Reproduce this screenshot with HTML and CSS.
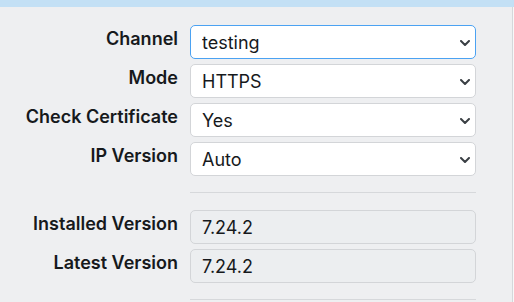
FILE: index.html
```html
<!DOCTYPE html>
<html lang="en">
<head>
<meta charset="utf-8">
<title>Update settings</title>
<link rel="stylesheet" href="styles.css">
</head>
<body>
<div class="topbar"></div>
<div class="panel">
  <form class="form">
    <label class="label" for="channel">Channel</label>
    <div class="select focused">
      <select id="channel"><option>testing</option></select>
      <svg class="chev" width="10" height="6" viewBox="0 0 10 6"><path d="M1 1 L5 5 L9 1" fill="none" stroke="#3a3f44" stroke-width="2" stroke-linecap="round" stroke-linejoin="round"/></svg>
    </div>

    <label class="label" for="mode">Mode</label>
    <div class="select">
      <select id="mode"><option>HTTPS</option></select>
      <svg class="chev" width="10" height="6" viewBox="0 0 10 6"><path d="M1 1 L5 5 L9 1" fill="none" stroke="#3a3f44" stroke-width="2" stroke-linecap="round" stroke-linejoin="round"/></svg>
    </div>

    <label class="label" for="cert">Check Certificate</label>
    <div class="select">
      <select id="cert"><option>Yes</option></select>
      <svg class="chev" width="10" height="6" viewBox="0 0 10 6"><path d="M1 1 L5 5 L9 1" fill="none" stroke="#3a3f44" stroke-width="2" stroke-linecap="round" stroke-linejoin="round"/></svg>
    </div>

    <label class="label" for="ipv">IP Version</label>
    <div class="select">
      <select id="ipv"><option>Auto</option></select>
      <svg class="chev" width="10" height="6" viewBox="0 0 10 6"><path d="M1 1 L5 5 L9 1" fill="none" stroke="#3a3f44" stroke-width="2" stroke-linecap="round" stroke-linejoin="round"/></svg>
    </div>

    <div class="sep"></div>

    <label class="label" for="inst">Installed Version</label>
    <div class="readonly" id="inst">7.24.2</div>

    <label class="label" for="latest">Latest Version</label>
    <div class="readonly" id="latest">7.24.2</div>

    <div class="sep"></div>
  </form>
</div>
</body>
</html>
```

FILE: styles.css
```css
html, body {
  margin: 0;
  padding: 0;
  background: #f7f8f9;
  font-family: Inter, "Noto Sans", sans-serif;
  color: #1d2024;
  overflow: hidden;
}

.topbar {
  height: 7px;
  background: #c3e0f5;
}

.panel {
  width: 512px;
  height: 295px;
  background: #eeeff1;
  border-right: 1px solid #d5d7da;
}

.form {
  display: grid;
  grid-template-columns: 178px 286px;
  column-gap: 12px;
  row-gap: 5px;
  padding-top: 18px;
  margin: 0;
}

.label {
  font-size: 18px;
  font-weight: 600;
  text-align: right;
  padding-top: 3px;
  line-height: normal;
  color: #16191c;
}

.select {
  position: relative;
  height: 34px;
}

.select select {
  appearance: none;
  -webkit-appearance: none;
  box-sizing: border-box;
  width: 100%;
  height: 34px;
  margin: 0;
  padding: 0 24px 0 11px;
  font-family: Inter, "Noto Sans", sans-serif;
  font-size: 18px;
  color: #16191c;
  background: #ffffff;
  border: 1px solid #d3d5d8;
  border-radius: 5px;
  outline: none;
}

.select.focused select {
  border-color: #4ba2f2;
}

.chev {
  position: absolute;
  right: 6px;
  top: 15px;
}

.readonly {
  box-sizing: border-box;
  height: 34px;
  padding: 0 11px;
  display: flex;
  align-items: center;
  font-size: 18px;
  color: #16191c;
  background: #eceef0;
  border: 1px solid #d3d5d8;
  border-radius: 5px;
}

.sep {
  grid-column: 2;
  height: 1px;
  background: #d6d8db;
  margin: 11px 0 12px;
}
```
